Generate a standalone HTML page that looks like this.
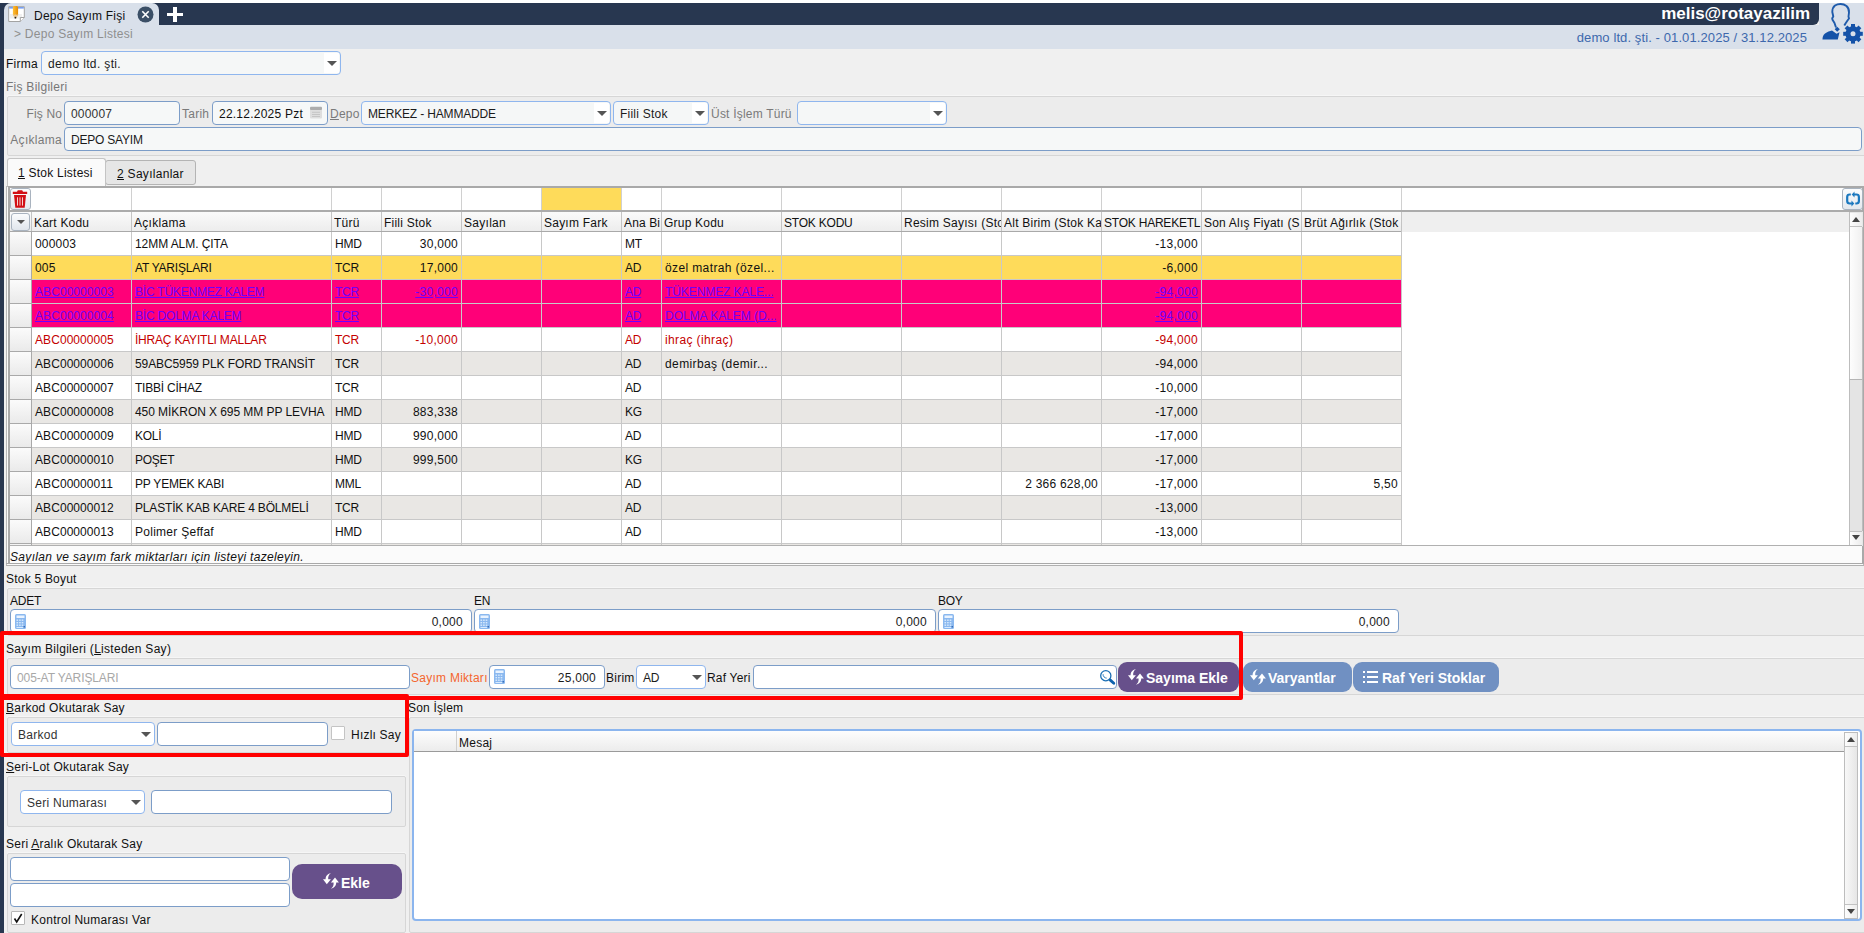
<!DOCTYPE html><html><head><meta charset="utf-8"><style>
html,body{margin:0;padding:0;}
body{width:1864px;height:933px;position:relative;overflow:hidden;background:#f0f0f0;font-family:"Liberation Sans",sans-serif;font-size:12px;color:#1b1b1b;}
div{position:absolute;box-sizing:border-box;}
.t{white-space:nowrap;}
.inp{border:1px solid #7c9dc8;border-radius:4px;background:#fff;}
.inpl{border:1px solid #7c9dc8;border-radius:4px;background:#f6f8f8;}
.cmb{border:1px solid #8fb6ee;border-radius:4px;background:#f5f7f7;}
.cmbw{border:1px solid #8fb6ee;border-radius:4px;background:#fff;}
.fs{border:1px solid #d6d6d6;border-radius:2px;background:#ececec;box-shadow:0 -1px 0 #f6f6f6;}
.arr{width:0;height:0;border-left:5px solid transparent;border-right:5px solid transparent;border-top:5px solid #555;}
.red{border:4px solid #ff0000;border-radius:2px;}
.btn{border-radius:9px;color:#fff;font-weight:bold;font-size:14px;}
u{text-decoration:underline;}
</style></head><body>

<div class="" style="left:0px;top:0px;width:1864px;height:3px;background:#fff;"></div>
<div class="" style="left:0px;top:3px;width:1819px;height:22px;background:#283750;border-bottom-right-radius:6px;"></div>
<div class="" style="left:4px;top:25px;width:1860px;height:24px;background:#d9e0ea;"></div>
<div class="" style="left:1819px;top:3px;width:45px;height:22px;background:#d9e0ea;"></div>
<div class="" style="left:0px;top:3px;width:4px;height:930px;background:#283750;"></div>
<div class="" style="left:4px;top:3px;width:155px;height:23px;background:#d9e0ea;border-top-left-radius:7px;border-top-right-radius:7px;"></div>
<svg style="position:absolute;left:4px;top:3px" width="24" height="24" viewBox="0 0 24 24">
<defs><linearGradient id="pg" x1="0" x2="1"><stop offset="0" stop-color="#ffc23a"/><stop offset="1" stop-color="#e58a00"/></linearGradient></defs>
<path d="M4.7 3.7h15.6v10.8l-4 4H4.7z" fill="#fff" stroke="#a3a3a3" stroke-width="1"/>
<rect x="5.2" y="4.2" width="14.6" height="1.3" fill="#5b8cf2"/>
<rect x="6" y="11" width="12" height="4.5" fill="#f0f0f0"/>
<path d="M16.3 18.5v-4h4" fill="#fff" stroke="#a3a3a3" stroke-width="1"/>
<path d="M8.9 4.5c0-1 0.8-1.5 2.6-1.5s2.6 0.5 2.6 1.5v7.5l-2.6 3.6l-2.6-3.6z" fill="url(#pg)"/>
<path d="M8.9 12l1 -0.8l0.8 0.9l0.8-0.9l0.8 0.9l0.8-0.9l1 0.8l-2.6 3.6z" fill="#e8c89a"/>
<circle cx="11.4" cy="14.7" r="0.9" fill="#222"/>
</svg>
<div class="t" style="left:34px;top:9px;font-size:12px;line-height:14px;letter-spacing:0.22px;color:#111;">Depo Sayım Fişi</div>
<svg style="position:absolute;left:137px;top:6px" width="17" height="17" viewBox="0 0 17 17">
<circle cx="8.5" cy="8.5" r="8" fill="#3b4f66"/>
<path d="M5.3 5.3l6.4 6.4M11.7 5.3l-6.4 6.4" stroke="#fff" stroke-width="1.6"/>
</svg>
<div class="" style="left:167px;top:13px;width:16px;height:3px;background:#fff;"></div>
<div class="" style="left:173px;top:7px;width:4px;height:15px;background:#fff;"></div>
<div class="t" style="left:14px;top:27px;font-size:12px;line-height:14px;letter-spacing:0.26px;color:#8f8f8f;">&gt; Depo Sayım Listesi</div>
<div class="t" style="right:54px;top:4px;font-size:17px;line-height:20px;color:#fff;font-weight:bold;">melis@rotayazilim</div>
<div class="t" style="right:57px;top:30px;font-size:13px;line-height:15px;color:#3d68ad;letter-spacing:0.1px;">demo ltd. şti. - 01.01.2025 / 31.12.2025</div>
<svg style="position:absolute;left:1820px;top:2px" width="44" height="44" viewBox="0 0 44 44">
<path d="M16 25.5L14.5 21L12.5 17.8L12.2 16.2L13.3 14.5L12.3 10C12.3 7 13 5 15 3.5C17 2.2 19 2 20.5 2C23 2 25 2.8 26.5 4C28.5 6 29.2 8 29 10.5L28.5 14.5L29 16.5L27.5 18.5L25.5 21.5L24.3 23.5" fill="none" stroke="#1f5bab" stroke-width="1.9" stroke-linejoin="round"/>
<path d="M17.2 24.8l2.6 2.5l-2.6 2.5l-2.5-2.5z" fill="#1452a8"/>
<path d="M2.5 37.5C2.5 35 3 33 5 31.5C7 30 10 28.8 12 28.5L16.5 31.8L19.5 30.3L17.8 37.5z" fill="#1452a8"/>
<g transform="translate(33,31.8)" fill="#1452a8">
<circle r="7.6"/><rect x="-2" y="-9.8" width="4" height="4.5" transform="rotate(0)"/><rect x="-2" y="-9.8" width="4" height="4.5" transform="rotate(45)"/><rect x="-2" y="-9.8" width="4" height="4.5" transform="rotate(90)"/><rect x="-2" y="-9.8" width="4" height="4.5" transform="rotate(135)"/><rect x="-2" y="-9.8" width="4" height="4.5" transform="rotate(180)"/><rect x="-2" y="-9.8" width="4" height="4.5" transform="rotate(225)"/><rect x="-2" y="-9.8" width="4" height="4.5" transform="rotate(270)"/><rect x="-2" y="-9.8" width="4" height="4.5" transform="rotate(315)"/>
<circle r="2.5" fill="#d9e0ea"/>
</g>
</svg>
<div class="t" style="left:6px;top:57px;font-size:12px;line-height:14px;letter-spacing:0.24px;color:#111;">Firma</div>
<div class="cmb" style="left:41px;top:51px;width:300px;height:24px;"></div>
<div class="" style="left:324px;top:53px;width:15px;height:20px;background:#fff;"></div>
<div class="arr" style="left:327px;top:61px;"></div>
<div class="t" style="left:48px;top:57px;font-size:12px;line-height:14px;letter-spacing:0.36px;color:#1b1b1b;">demo ltd. şti.</div>
<div class="t" style="left:6px;top:80px;font-size:12px;line-height:14px;letter-spacing:0.26px;color:#777;">Fiş Bilgileri</div>
<div class="fs" style="left:7px;top:96px;width:1870px;height:60px;"></div>
<div class="t" style="right:1802px;top:107px;font-size:12px;line-height:14px;letter-spacing:0.13px;color:#7a7a7a;">Fiş No</div>
<div class="inpl" style="left:64px;top:101px;width:116px;height:24px;"></div>
<div class="t" style="left:71px;top:107px;font-size:12px;line-height:14px;letter-spacing:0.20px;color:#333;">000007</div>
<div class="t" style="left:182px;top:107px;font-size:12px;line-height:14px;letter-spacing:0.24px;color:#7a7a7a;">Tarih</div>
<div class="inpl" style="left:212px;top:101px;width:116px;height:24px;"></div>
<div class="t" style="left:219px;top:107px;font-size:12px;line-height:14px;letter-spacing:0.23px;color:#111;">22.12.2025 Pzt</div>
<svg style="position:absolute;left:310px;top:106px" width="12" height="13" viewBox="0 0 12 13"><rect x="0" y="3" width="12" height="9.5" rx="1" fill="#dedede"/><rect x="0" y="0.8" width="12" height="3.2" rx="1" fill="#acacac"/><path d="M2 6.3h8M2 8.5h8M2 10.5h8" stroke="#c2c2c2" stroke-width="0.9"/></svg>
<div class="t" style="left:330px;top:107px;font-size:12px;line-height:14px;letter-spacing:0.21px;color:#7a7a7a;"><u>D</u>epo</div>
<div class="cmb" style="left:361px;top:101px;width:250px;height:24px;"></div>
<div class="" style="left:594px;top:103px;width:15px;height:20px;background:#fff;"></div>
<div class="arr" style="left:597px;top:111px;"></div>
<div class="t" style="left:368px;top:107px;font-size:12px;line-height:14px;letter-spacing:-0.16px;color:#1b1b1b;">MERKEZ - HAMMADDE</div>
<div class="cmb" style="left:613px;top:101px;width:96px;height:24px;"></div>
<div class="" style="left:692px;top:103px;width:15px;height:20px;background:#fff;"></div>
<div class="arr" style="left:695px;top:111px;"></div>
<div class="t" style="left:620px;top:107px;font-size:12px;line-height:14px;letter-spacing:0.23px;color:#1b1b1b;">Fiili Stok</div>
<div class="t" style="left:711px;top:107px;font-size:12px;line-height:14px;letter-spacing:0.21px;color:#7a7a7a;">Üst İşlem Türü</div>
<div class="cmb" style="left:797px;top:101px;width:150px;height:24px;"></div>
<div class="" style="left:930px;top:103px;width:15px;height:20px;background:#fff;"></div>
<div class="arr" style="left:933px;top:111px;"></div>
<div class="t" style="right:1802px;top:133px;font-size:12px;line-height:14px;letter-spacing:0.29px;color:#7a7a7a;">Açıklama</div>
<div class="inpl" style="left:64px;top:127px;width:1798px;height:24px;"></div>
<div class="t" style="left:71px;top:133px;font-size:12px;line-height:14px;letter-spacing:-0.21px;color:#1b1b1b;">DEPO SAYIM</div>
<div class="" style="left:105px;top:160px;width:91px;height:25px;background:#e6e6e6;border:1px solid #b4b4b4;border-radius:3px;"></div>
<div class="" style="left:7px;top:158px;width:99px;height:28px;background:#fafafa;border:1px solid #c4c4c4;border-bottom:none;border-radius:3px 3px 0 0;"></div>
<div class="t" style="left:18px;top:166px;font-size:12px;line-height:14px;letter-spacing:0.24px;color:#111;"><u>1</u> Stok Listesi</div>
<div class="t" style="left:117px;top:167px;font-size:12px;line-height:14px;letter-spacing:0.29px;color:#111;"><u>2</u> Sayılanlar</div>
<div class="" style="left:6px;top:186px;width:1858px;height:380px;border:1px solid #b9b9b9;background:#fafafa;"></div>
<div class="" style="left:8px;top:186px;width:1856px;height:378px;border:2px solid #a9a9a9;border-bottom:1px solid #a9a9a9;background:#fff;"></div>
<div class="" style="left:10px;top:188px;width:1852px;height:22px;background:#fff;"></div>
<div class="" style="left:131px;top:188px;width:1px;height:22px;background:#d0d0d0;"></div>
<div class="" style="left:331px;top:188px;width:1px;height:22px;background:#d0d0d0;"></div>
<div class="" style="left:381px;top:188px;width:1px;height:22px;background:#d0d0d0;"></div>
<div class="" style="left:461px;top:188px;width:1px;height:22px;background:#d0d0d0;"></div>
<div class="" style="left:541px;top:188px;width:1px;height:22px;background:#d0d0d0;"></div>
<div class="" style="left:621px;top:188px;width:1px;height:22px;background:#d0d0d0;"></div>
<div class="" style="left:661px;top:188px;width:1px;height:22px;background:#d0d0d0;"></div>
<div class="" style="left:781px;top:188px;width:1px;height:22px;background:#d0d0d0;"></div>
<div class="" style="left:901px;top:188px;width:1px;height:22px;background:#d0d0d0;"></div>
<div class="" style="left:1001px;top:188px;width:1px;height:22px;background:#d0d0d0;"></div>
<div class="" style="left:1101px;top:188px;width:1px;height:22px;background:#d0d0d0;"></div>
<div class="" style="left:1201px;top:188px;width:1px;height:22px;background:#d0d0d0;"></div>
<div class="" style="left:1301px;top:188px;width:1px;height:22px;background:#d0d0d0;"></div>
<div class="" style="left:1401px;top:188px;width:1px;height:22px;background:#d0d0d0;"></div>
<div class="" style="left:542px;top:188px;width:79px;height:22px;background:#fedb5a;"></div>
<div class="" style="left:10px;top:210px;width:1852px;height:2px;background:#ababab;"></div>
<div class="" style="left:10px;top:188px;width:21px;height:22px;border:1px solid #a9b3bf;border-radius:3px;background:linear-gradient(#fbfcfd,#e3e8ee);"></div>
<svg style="position:absolute;left:12px;top:190px" width="16" height="19" viewBox="0 0 16 19"><path d="M5.8 0.3h4.4l0.8 1.5h4.2v2.3H0.8V1.8H5z" fill="#d20f16"/><path d="M2 5h12l-1.3 12.8H3.3z" fill="#d20f16"/><path d="M5.5 7.3v8.3M8 7.3v8.3M10.5 7.3v8.3" stroke="#f6d0d0" stroke-width="1"/></svg>
<div class="" style="left:1842px;top:188px;width:21px;height:22px;border:1px solid #a9b3bf;border-radius:3px;background:linear-gradient(#fbfcfd,#e3e8ee);"></div>
<svg style="position:absolute;left:1843px;top:189px" width="20" height="20" viewBox="0 0 20 20"><g fill="none" stroke="#1b78bf" stroke-width="2.2"><path d="M7.8 5.5H6.7Q4.2 5.5 4.2 8V12Q4.2 14.5 6.7 14.5H9"/><path d="M12.3 14.5H13.4Q15.9 14.5 15.9 12V8Q15.9 5.5 13.4 5.5H11"/></g><g fill="#1b78bf"><path d="M8.5 11.5L11.3 14.5L8.5 17.5Z"/><path d="M11.5 2.5L8.7 5.5L11.5 8.5Z"/></g></svg>
<div class="" style="left:10px;top:212px;width:1839px;height:20px;background:#efefef;"></div>
<div class="" style="left:10px;top:212px;width:1391px;height:20px;background:linear-gradient(#fafafa,#ececec);"></div>
<div class="" style="left:31px;top:212px;width:1px;height:20px;background:#c4c4c4;"></div>
<div class="" style="left:131px;top:212px;width:1px;height:20px;background:#c4c4c4;"></div>
<div class="" style="left:331px;top:212px;width:1px;height:20px;background:#c4c4c4;"></div>
<div class="" style="left:381px;top:212px;width:1px;height:20px;background:#c4c4c4;"></div>
<div class="" style="left:461px;top:212px;width:1px;height:20px;background:#c4c4c4;"></div>
<div class="" style="left:541px;top:212px;width:1px;height:20px;background:#c4c4c4;"></div>
<div class="" style="left:621px;top:212px;width:1px;height:20px;background:#c4c4c4;"></div>
<div class="" style="left:661px;top:212px;width:1px;height:20px;background:#c4c4c4;"></div>
<div class="" style="left:781px;top:212px;width:1px;height:20px;background:#c4c4c4;"></div>
<div class="" style="left:901px;top:212px;width:1px;height:20px;background:#c4c4c4;"></div>
<div class="" style="left:1001px;top:212px;width:1px;height:20px;background:#c4c4c4;"></div>
<div class="" style="left:1101px;top:212px;width:1px;height:20px;background:#c4c4c4;"></div>
<div class="" style="left:1201px;top:212px;width:1px;height:20px;background:#c4c4c4;"></div>
<div class="" style="left:1301px;top:212px;width:1px;height:20px;background:#c4c4c4;"></div>
<div class="" style="left:1401px;top:212px;width:1px;height:20px;background:#c4c4c4;"></div>
<div class="" style="left:10px;top:231px;width:1391px;height:1px;background:#a9a9a9;"></div>
<div class="" style="left:11px;top:213px;width:19px;height:18px;border:1px solid #a9b3bf;border-radius:3px;background:linear-gradient(#fbfcfd,#e1e6ec);"></div>
<div class="arr" style="left:17px;top:220px;border-left-width:4px;border-right-width:4px;border-top-width:4px;"></div>
<div class="t" style="left:34px;top:216px;width:97px;overflow:hidden;line-height:14px;color:#111;letter-spacing:0.21px;">Kart Kodu</div>
<div class="t" style="left:134px;top:216px;width:197px;overflow:hidden;line-height:14px;color:#111;letter-spacing:0.29px;">Açıklama</div>
<div class="t" style="left:334px;top:216px;width:47px;overflow:hidden;line-height:14px;color:#111;letter-spacing:0.21px;">Türü</div>
<div class="t" style="left:384px;top:216px;width:77px;overflow:hidden;line-height:14px;color:#111;letter-spacing:0.23px;">Fiili Stok</div>
<div class="t" style="left:464px;top:216px;width:77px;overflow:hidden;line-height:14px;color:#111;letter-spacing:0.28px;">Sayılan</div>
<div class="t" style="left:544px;top:216px;width:77px;overflow:hidden;line-height:14px;color:#111;letter-spacing:0.23px;">Sayım Fark</div>
<div class="t" style="left:624px;top:216px;width:37px;overflow:hidden;line-height:14px;color:#111;letter-spacing:0.13px;">Ana Bi</div>
<div class="t" style="left:664px;top:216px;width:117px;overflow:hidden;line-height:14px;color:#111;letter-spacing:0.21px;">Grup Kodu</div>
<div class="t" style="left:784px;top:216px;width:117px;overflow:hidden;line-height:14px;color:#111;letter-spacing:-0.21px;">STOK KODU</div>
<div class="t" style="left:904px;top:216px;width:97px;overflow:hidden;line-height:14px;color:#111;letter-spacing:0.25px;">Resim Sayısı (Stok</div>
<div class="t" style="left:1004px;top:216px;width:97px;overflow:hidden;line-height:14px;color:#111;letter-spacing:0.23px;">Alt Birim (Stok Kart</div>
<div class="t" style="left:1104px;top:216px;width:97px;overflow:hidden;line-height:14px;color:#111;letter-spacing:-0.22px;">STOK HAREKETL</div>
<div class="t" style="left:1204px;top:216px;width:97px;overflow:hidden;line-height:14px;color:#111;letter-spacing:0.21px;">Son Alış Fiyatı (S</div>
<div class="t" style="left:1304px;top:216px;width:97px;overflow:hidden;line-height:14px;color:#111;letter-spacing:0.25px;">Brüt Ağırlık (Stok</div>
<div class="" style="left:31px;top:232px;width:1370px;height:23px;background:#fff;"></div>
<div class="" style="left:10px;top:232px;width:21px;height:23px;background:linear-gradient(#fbfbfb,#eaeaea);"></div>
<div class="" style="left:10px;top:255px;width:21px;height:1px;background:#a9a9a9;"></div>
<div class="" style="left:31px;top:255px;width:1370px;height:1px;background:#c8c8c8;"></div>
<div class="t" style="left:35px;top:237px;line-height:14px;color:#111;letter-spacing:0.20px;">000003</div>
<div class="t" style="left:135px;top:237px;line-height:14px;color:#111;letter-spacing:-0.07px;">12MM ALM. ÇITA</div>
<div class="t" style="left:335px;top:237px;line-height:14px;color:#111;letter-spacing:-0.26px;">HMD</div>
<div class="t" style="right:1406px;top:237px;line-height:14px;color:#111;letter-spacing:0.25px;">30,000</div>
<div class="t" style="left:625px;top:237px;line-height:14px;color:#111;letter-spacing:-0.26px;">MT</div>
<div class="t" style="right:666px;top:237px;line-height:14px;color:#111;letter-spacing:0.29px;">-13,000</div>
<div class="" style="left:31px;top:256px;width:1370px;height:23px;background:#fedb5a;"></div>
<div class="" style="left:10px;top:256px;width:21px;height:23px;background:linear-gradient(#fbfbfb,#eaeaea);"></div>
<div class="" style="left:10px;top:279px;width:21px;height:1px;background:#a9a9a9;"></div>
<div class="" style="left:31px;top:279px;width:1370px;height:1px;background:#c8c8c8;"></div>
<div class="t" style="left:35px;top:261px;line-height:14px;color:#111;letter-spacing:0.20px;">005</div>
<div class="t" style="left:135px;top:261px;line-height:14px;color:#111;letter-spacing:-0.22px;">AT YARIŞLARI</div>
<div class="t" style="left:335px;top:261px;line-height:14px;color:#111;letter-spacing:-0.26px;">TCR</div>
<div class="t" style="right:1406px;top:261px;line-height:14px;color:#111;letter-spacing:0.25px;">17,000</div>
<div class="t" style="left:625px;top:261px;line-height:14px;color:#111;letter-spacing:-0.26px;">AD</div>
<div class="t" style="left:665px;top:261px;line-height:14px;color:#111;letter-spacing:0.38px;">özel matrah (özel...</div>
<div class="t" style="right:666px;top:261px;line-height:14px;color:#111;letter-spacing:0.30px;">-6,000</div>
<div class="" style="left:31px;top:280px;width:1370px;height:23px;background:#ff0078;"></div>
<div class="" style="left:10px;top:280px;width:21px;height:23px;background:linear-gradient(#fbfbfb,#eaeaea);"></div>
<div class="" style="left:10px;top:303px;width:21px;height:1px;background:#a9a9a9;"></div>
<div class="" style="left:31px;top:303px;width:1370px;height:1px;background:#c8c8c8;"></div>
<div class="t" style="left:35px;top:285px;line-height:14px;color:#6e00ff;text-decoration:underline;letter-spacing:0.07px;">ABC00000003</div>
<div class="t" style="left:135px;top:285px;line-height:14px;color:#6e00ff;text-decoration:underline;letter-spacing:-0.21px;">BİC TÜKENMEZ KALEM</div>
<div class="t" style="left:335px;top:285px;line-height:14px;color:#6e00ff;text-decoration:underline;letter-spacing:-0.26px;">TCR</div>
<div class="t" style="right:1406px;top:285px;line-height:14px;color:#6e00ff;text-decoration:underline;letter-spacing:0.29px;">-30,000</div>
<div class="t" style="left:625px;top:285px;line-height:14px;color:#6e00ff;text-decoration:underline;letter-spacing:-0.26px;">AD</div>
<div class="t" style="left:665px;top:285px;line-height:14px;color:#6e00ff;text-decoration:underline;letter-spacing:-0.09px;">TÜKENMEZ KALE...</div>
<div class="t" style="right:666px;top:285px;line-height:14px;color:#6e00ff;text-decoration:underline;letter-spacing:0.29px;">-94,000</div>
<div class="" style="left:31px;top:304px;width:1370px;height:23px;background:#ff0078;"></div>
<div class="" style="left:10px;top:304px;width:21px;height:23px;background:linear-gradient(#fbfbfb,#eaeaea);"></div>
<div class="" style="left:10px;top:327px;width:21px;height:1px;background:#a9a9a9;"></div>
<div class="" style="left:31px;top:327px;width:1370px;height:1px;background:#c8c8c8;"></div>
<div class="t" style="left:35px;top:309px;line-height:14px;color:#6e00ff;text-decoration:underline;letter-spacing:0.07px;">ABC00000004</div>
<div class="t" style="left:135px;top:309px;line-height:14px;color:#6e00ff;text-decoration:underline;letter-spacing:-0.20px;">BİC DOLMA KALEM</div>
<div class="t" style="left:335px;top:309px;line-height:14px;color:#6e00ff;text-decoration:underline;letter-spacing:-0.26px;">TCR</div>
<div class="t" style="left:625px;top:309px;line-height:14px;color:#6e00ff;text-decoration:underline;letter-spacing:-0.26px;">AD</div>
<div class="t" style="left:665px;top:309px;line-height:14px;color:#6e00ff;text-decoration:underline;letter-spacing:-0.03px;">DOLMA KALEM (D...</div>
<div class="t" style="right:666px;top:309px;line-height:14px;color:#6e00ff;text-decoration:underline;letter-spacing:0.29px;">-94,000</div>
<div class="" style="left:31px;top:328px;width:1370px;height:23px;background:#fff;"></div>
<div class="" style="left:10px;top:328px;width:21px;height:23px;background:linear-gradient(#fbfbfb,#eaeaea);"></div>
<div class="" style="left:10px;top:351px;width:21px;height:1px;background:#a9a9a9;"></div>
<div class="" style="left:31px;top:351px;width:1370px;height:1px;background:#c8c8c8;"></div>
<div class="t" style="left:35px;top:333px;line-height:14px;color:#c40000;letter-spacing:0.07px;">ABC00000005</div>
<div class="t" style="left:135px;top:333px;line-height:14px;color:#c40000;letter-spacing:-0.21px;">İHRAÇ KAYITLI MALLAR</div>
<div class="t" style="left:335px;top:333px;line-height:14px;color:#c40000;letter-spacing:-0.26px;">TCR</div>
<div class="t" style="right:1406px;top:333px;line-height:14px;color:#c40000;letter-spacing:0.29px;">-10,000</div>
<div class="t" style="left:625px;top:333px;line-height:14px;color:#c40000;letter-spacing:-0.26px;">AD</div>
<div class="t" style="left:665px;top:333px;line-height:14px;color:#c40000;letter-spacing:0.38px;">ihraç (ihraç)</div>
<div class="t" style="right:666px;top:333px;line-height:14px;color:#c40000;letter-spacing:0.29px;">-94,000</div>
<div class="" style="left:31px;top:352px;width:1370px;height:23px;background:#e9e7e4;"></div>
<div class="" style="left:10px;top:352px;width:21px;height:23px;background:linear-gradient(#fbfbfb,#eaeaea);"></div>
<div class="" style="left:10px;top:375px;width:21px;height:1px;background:#a9a9a9;"></div>
<div class="" style="left:31px;top:375px;width:1370px;height:1px;background:#c8c8c8;"></div>
<div class="t" style="left:35px;top:357px;line-height:14px;color:#111;letter-spacing:0.07px;">ABC00000006</div>
<div class="t" style="left:135px;top:357px;line-height:14px;color:#111;letter-spacing:-0.10px;">59ABC5959 PLK FORD TRANSİT</div>
<div class="t" style="left:335px;top:357px;line-height:14px;color:#111;letter-spacing:-0.26px;">TCR</div>
<div class="t" style="left:625px;top:357px;line-height:14px;color:#111;letter-spacing:-0.26px;">AD</div>
<div class="t" style="left:665px;top:357px;line-height:14px;color:#111;letter-spacing:0.39px;">demirbaş (demir...</div>
<div class="t" style="right:666px;top:357px;line-height:14px;color:#111;letter-spacing:0.29px;">-94,000</div>
<div class="" style="left:31px;top:376px;width:1370px;height:23px;background:#fff;"></div>
<div class="" style="left:10px;top:376px;width:21px;height:23px;background:linear-gradient(#fbfbfb,#eaeaea);"></div>
<div class="" style="left:10px;top:399px;width:21px;height:1px;background:#a9a9a9;"></div>
<div class="" style="left:31px;top:399px;width:1370px;height:1px;background:#c8c8c8;"></div>
<div class="t" style="left:35px;top:381px;line-height:14px;color:#111;letter-spacing:0.07px;">ABC00000007</div>
<div class="t" style="left:135px;top:381px;line-height:14px;color:#111;letter-spacing:-0.22px;">TIBBİ CİHAZ</div>
<div class="t" style="left:335px;top:381px;line-height:14px;color:#111;letter-spacing:-0.26px;">TCR</div>
<div class="t" style="left:625px;top:381px;line-height:14px;color:#111;letter-spacing:-0.26px;">AD</div>
<div class="t" style="right:666px;top:381px;line-height:14px;color:#111;letter-spacing:0.29px;">-10,000</div>
<div class="" style="left:31px;top:400px;width:1370px;height:23px;background:#e9e7e4;"></div>
<div class="" style="left:10px;top:400px;width:21px;height:23px;background:linear-gradient(#fbfbfb,#eaeaea);"></div>
<div class="" style="left:10px;top:423px;width:21px;height:1px;background:#a9a9a9;"></div>
<div class="" style="left:31px;top:423px;width:1370px;height:1px;background:#c8c8c8;"></div>
<div class="t" style="left:35px;top:405px;line-height:14px;color:#111;letter-spacing:0.07px;">ABC00000008</div>
<div class="t" style="left:135px;top:405px;line-height:14px;color:#111;letter-spacing:-0.06px;">450 MİKRON X 695 MM PP LEVHA</div>
<div class="t" style="left:335px;top:405px;line-height:14px;color:#111;letter-spacing:-0.26px;">HMD</div>
<div class="t" style="right:1406px;top:405px;line-height:14px;color:#111;letter-spacing:0.24px;">883,338</div>
<div class="t" style="left:625px;top:405px;line-height:14px;color:#111;letter-spacing:-0.26px;">KG</div>
<div class="t" style="right:666px;top:405px;line-height:14px;color:#111;letter-spacing:0.29px;">-17,000</div>
<div class="" style="left:31px;top:424px;width:1370px;height:23px;background:#fff;"></div>
<div class="" style="left:10px;top:424px;width:21px;height:23px;background:linear-gradient(#fbfbfb,#eaeaea);"></div>
<div class="" style="left:10px;top:447px;width:21px;height:1px;background:#a9a9a9;"></div>
<div class="" style="left:31px;top:447px;width:1370px;height:1px;background:#c8c8c8;"></div>
<div class="t" style="left:35px;top:429px;line-height:14px;color:#111;letter-spacing:0.07px;">ABC00000009</div>
<div class="t" style="left:135px;top:429px;line-height:14px;color:#111;letter-spacing:-0.26px;">KOLİ</div>
<div class="t" style="left:335px;top:429px;line-height:14px;color:#111;letter-spacing:-0.26px;">HMD</div>
<div class="t" style="right:1406px;top:429px;line-height:14px;color:#111;letter-spacing:0.24px;">990,000</div>
<div class="t" style="left:625px;top:429px;line-height:14px;color:#111;letter-spacing:-0.26px;">AD</div>
<div class="t" style="right:666px;top:429px;line-height:14px;color:#111;letter-spacing:0.29px;">-17,000</div>
<div class="" style="left:31px;top:448px;width:1370px;height:23px;background:#e9e7e4;"></div>
<div class="" style="left:10px;top:448px;width:21px;height:23px;background:linear-gradient(#fbfbfb,#eaeaea);"></div>
<div class="" style="left:10px;top:471px;width:21px;height:1px;background:#a9a9a9;"></div>
<div class="" style="left:31px;top:471px;width:1370px;height:1px;background:#c8c8c8;"></div>
<div class="t" style="left:35px;top:453px;line-height:14px;color:#111;letter-spacing:0.07px;">ABC00000010</div>
<div class="t" style="left:135px;top:453px;line-height:14px;color:#111;letter-spacing:-0.26px;">POŞET</div>
<div class="t" style="left:335px;top:453px;line-height:14px;color:#111;letter-spacing:-0.26px;">HMD</div>
<div class="t" style="right:1406px;top:453px;line-height:14px;color:#111;letter-spacing:0.24px;">999,500</div>
<div class="t" style="left:625px;top:453px;line-height:14px;color:#111;letter-spacing:-0.26px;">KG</div>
<div class="t" style="right:666px;top:453px;line-height:14px;color:#111;letter-spacing:0.29px;">-17,000</div>
<div class="" style="left:31px;top:472px;width:1370px;height:23px;background:#fff;"></div>
<div class="" style="left:10px;top:472px;width:21px;height:23px;background:linear-gradient(#fbfbfb,#eaeaea);"></div>
<div class="" style="left:10px;top:495px;width:21px;height:1px;background:#a9a9a9;"></div>
<div class="" style="left:31px;top:495px;width:1370px;height:1px;background:#c8c8c8;"></div>
<div class="t" style="left:35px;top:477px;line-height:14px;color:#111;letter-spacing:0.07px;">ABC00000011</div>
<div class="t" style="left:135px;top:477px;line-height:14px;color:#111;letter-spacing:-0.19px;">PP YEMEK KABI</div>
<div class="t" style="left:335px;top:477px;line-height:14px;color:#111;letter-spacing:-0.26px;">MML</div>
<div class="t" style="left:625px;top:477px;line-height:14px;color:#111;letter-spacing:-0.26px;">AD</div>
<div class="t" style="right:766px;top:477px;line-height:14px;color:#111;letter-spacing:0.23px;">2 366 628,00</div>
<div class="t" style="right:666px;top:477px;line-height:14px;color:#111;letter-spacing:0.29px;">-17,000</div>
<div class="t" style="right:466px;top:477px;line-height:14px;color:#111;letter-spacing:0.28px;">5,50</div>
<div class="" style="left:31px;top:496px;width:1370px;height:23px;background:#e9e7e4;"></div>
<div class="" style="left:10px;top:496px;width:21px;height:23px;background:linear-gradient(#fbfbfb,#eaeaea);"></div>
<div class="" style="left:10px;top:519px;width:21px;height:1px;background:#a9a9a9;"></div>
<div class="" style="left:31px;top:519px;width:1370px;height:1px;background:#c8c8c8;"></div>
<div class="t" style="left:35px;top:501px;line-height:14px;color:#111;letter-spacing:0.07px;">ABC00000012</div>
<div class="t" style="left:135px;top:501px;line-height:14px;color:#111;letter-spacing:-0.17px;">PLASTİK KAB KARE 4 BÖLMELİ</div>
<div class="t" style="left:335px;top:501px;line-height:14px;color:#111;letter-spacing:-0.26px;">TCR</div>
<div class="t" style="left:625px;top:501px;line-height:14px;color:#111;letter-spacing:-0.26px;">AD</div>
<div class="t" style="right:666px;top:501px;line-height:14px;color:#111;letter-spacing:0.29px;">-13,000</div>
<div class="" style="left:31px;top:520px;width:1370px;height:23px;background:#fff;"></div>
<div class="" style="left:10px;top:520px;width:21px;height:23px;background:linear-gradient(#fbfbfb,#eaeaea);"></div>
<div class="" style="left:10px;top:543px;width:21px;height:1px;background:#a9a9a9;"></div>
<div class="" style="left:31px;top:543px;width:1370px;height:1px;background:#c8c8c8;"></div>
<div class="t" style="left:35px;top:525px;line-height:14px;color:#111;letter-spacing:0.07px;">ABC00000013</div>
<div class="t" style="left:135px;top:525px;line-height:14px;color:#111;letter-spacing:0.27px;">Polimer Şeffaf</div>
<div class="t" style="left:335px;top:525px;line-height:14px;color:#111;letter-spacing:-0.26px;">HMD</div>
<div class="t" style="left:625px;top:525px;line-height:14px;color:#111;letter-spacing:-0.26px;">AD</div>
<div class="t" style="right:666px;top:525px;line-height:14px;color:#111;letter-spacing:0.29px;">-13,000</div>
<div class="" style="left:31px;top:544px;width:1370px;height:1px;background:#e9e7e4;"></div>
<div class="" style="left:10px;top:544px;width:21px;height:1px;background:#f4f4f4;"></div>
<div class="" style="left:31px;top:232px;width:1px;height:313px;background:#a9a9a9;"></div>
<div class="" style="left:131px;top:232px;width:1px;height:313px;background:#c8c8c8;"></div>
<div class="" style="left:331px;top:232px;width:1px;height:313px;background:#c8c8c8;"></div>
<div class="" style="left:381px;top:232px;width:1px;height:313px;background:#c8c8c8;"></div>
<div class="" style="left:461px;top:232px;width:1px;height:313px;background:#c8c8c8;"></div>
<div class="" style="left:541px;top:232px;width:1px;height:313px;background:#c8c8c8;"></div>
<div class="" style="left:621px;top:232px;width:1px;height:313px;background:#c8c8c8;"></div>
<div class="" style="left:661px;top:232px;width:1px;height:313px;background:#c8c8c8;"></div>
<div class="" style="left:781px;top:232px;width:1px;height:313px;background:#c8c8c8;"></div>
<div class="" style="left:901px;top:232px;width:1px;height:313px;background:#c8c8c8;"></div>
<div class="" style="left:1001px;top:232px;width:1px;height:313px;background:#c8c8c8;"></div>
<div class="" style="left:1101px;top:232px;width:1px;height:313px;background:#c8c8c8;"></div>
<div class="" style="left:1201px;top:232px;width:1px;height:313px;background:#c8c8c8;"></div>
<div class="" style="left:1301px;top:232px;width:1px;height:313px;background:#c8c8c8;"></div>
<div class="" style="left:1401px;top:232px;width:1px;height:313px;background:#c8c8c8;"></div>
<div class="" style="left:1849px;top:212px;width:14px;height:334px;background:#e6e6e6;border-left:1px solid #bdbdbd;"></div>
<div class="" style="left:1850px;top:213px;width:12px;height:14px;background:linear-gradient(90deg,#fdfdfd,#ececec);border-bottom:1px solid #c2c2c2;"></div>
<div style="left:1852px;top:217px;width:0;height:0;border-left:4px solid transparent;border-right:4px solid transparent;border-bottom:5px solid #444;"></div>
<div class="" style="left:1850px;top:531px;width:12px;height:14px;background:linear-gradient(90deg,#fdfdfd,#ececec);border-top:1px solid #c2c2c2;"></div>
<div style="left:1852px;top:535px;width:0;height:0;border-left:4px solid transparent;border-right:4px solid transparent;border-top:5px solid #444;"></div>
<div class="" style="left:1849px;top:227px;width:14px;height:304px;background:#e4e4e4;border-left:1px solid #bdbdbd;border-right:1px solid #bdbdbd;"></div>
<div class="" style="left:1849px;top:227px;width:14px;height:153px;background:linear-gradient(90deg,#fdfdfd,#f0f0f0);border-left:1px solid #bdbdbd;border-right:1px solid #bdbdbd;border-bottom:1px solid #b5b5b5;"></div>
<div class="" style="left:10px;top:545px;width:1852px;height:1px;background:#b0b0b0;"></div>
<div class="" style="left:10px;top:546px;width:1852px;height:17px;background:#fbfbfb;"></div>
<div class="t" style="left:10px;top:550px;line-height:14px;font-style:italic;font-size:12px;letter-spacing:0.32px;color:#111;">Sayılan ve sayım fark miktarları için listeyi tazeleyin.</div>
<div class="" style="left:6px;top:563px;width:1858px;height:1px;background:#a9a9a9;"></div>
<div class="" style="left:6px;top:565px;width:1858px;height:1px;background:#b0b0b0;"></div>
<div class="t" style="left:6px;top:572px;font-size:12px;line-height:14px;letter-spacing:0.22px;color:#111;">Stok 5 Boyut</div>
<div class="fs" style="left:7px;top:588px;width:1870px;height:48px;"></div>
<div class="t" style="left:10px;top:594px;font-size:12px;line-height:14px;letter-spacing:-0.26px;color:#111;">ADET</div>
<div class="t" style="left:474px;top:594px;font-size:12px;line-height:14px;letter-spacing:-0.26px;color:#111;">EN</div>
<div class="t" style="left:938px;top:594px;font-size:12px;line-height:14px;letter-spacing:-0.26px;color:#111;">BOY</div>
<div class="inp" style="left:10px;top:609px;width:462px;height:24px;"></div>
<svg style="position:absolute;left:15px;top:614px" width="11" height="15" viewBox="0 0 11 15"><rect x="0" y="0" width="11" height="15" rx="1.5" fill="#8ab8ef"/><rect x="1.5" y="1.5" width="8" height="2.5" fill="#e9f3ff"/><g fill="#d8eafd"><rect x="1.5" y="5.5" width="1.6" height="1.4"/><rect x="4.1" y="5.5" width="1.6" height="1.4"/><rect x="6.7" y="5.5" width="1.6" height="1.4"/><rect x="1.5" y="8" width="1.6" height="1.4"/><rect x="4.1" y="8" width="1.6" height="1.4"/><rect x="6.7" y="8" width="1.6" height="1.4"/><rect x="1.5" y="10.5" width="1.6" height="1.4"/><rect x="4.1" y="10.5" width="1.6" height="1.4"/><rect x="6.7" y="10.5" width="1.6" height="1.4"/><rect x="1.5" y="13" width="6.8" height="1"/></g><rect x="8.5" y="12" width="1.5" height="1.5" fill="#3a6fb8"/></svg>
<div class="t" style="right:1401px;top:615px;font-size:12px;line-height:14px;letter-spacing:0.26px;color:#1b1b1b;">0,000</div>
<div class="inp" style="left:474px;top:609px;width:462px;height:24px;"></div>
<svg style="position:absolute;left:479px;top:614px" width="11" height="15" viewBox="0 0 11 15"><rect x="0" y="0" width="11" height="15" rx="1.5" fill="#8ab8ef"/><rect x="1.5" y="1.5" width="8" height="2.5" fill="#e9f3ff"/><g fill="#d8eafd"><rect x="1.5" y="5.5" width="1.6" height="1.4"/><rect x="4.1" y="5.5" width="1.6" height="1.4"/><rect x="6.7" y="5.5" width="1.6" height="1.4"/><rect x="1.5" y="8" width="1.6" height="1.4"/><rect x="4.1" y="8" width="1.6" height="1.4"/><rect x="6.7" y="8" width="1.6" height="1.4"/><rect x="1.5" y="10.5" width="1.6" height="1.4"/><rect x="4.1" y="10.5" width="1.6" height="1.4"/><rect x="6.7" y="10.5" width="1.6" height="1.4"/><rect x="1.5" y="13" width="6.8" height="1"/></g><rect x="8.5" y="12" width="1.5" height="1.5" fill="#3a6fb8"/></svg>
<div class="t" style="right:937px;top:615px;font-size:12px;line-height:14px;letter-spacing:0.26px;color:#1b1b1b;">0,000</div>
<div class="inp" style="left:938px;top:609px;width:461px;height:24px;"></div>
<svg style="position:absolute;left:943px;top:614px" width="11" height="15" viewBox="0 0 11 15"><rect x="0" y="0" width="11" height="15" rx="1.5" fill="#8ab8ef"/><rect x="1.5" y="1.5" width="8" height="2.5" fill="#e9f3ff"/><g fill="#d8eafd"><rect x="1.5" y="5.5" width="1.6" height="1.4"/><rect x="4.1" y="5.5" width="1.6" height="1.4"/><rect x="6.7" y="5.5" width="1.6" height="1.4"/><rect x="1.5" y="8" width="1.6" height="1.4"/><rect x="4.1" y="8" width="1.6" height="1.4"/><rect x="6.7" y="8" width="1.6" height="1.4"/><rect x="1.5" y="10.5" width="1.6" height="1.4"/><rect x="4.1" y="10.5" width="1.6" height="1.4"/><rect x="6.7" y="10.5" width="1.6" height="1.4"/><rect x="1.5" y="13" width="6.8" height="1"/></g><rect x="8.5" y="12" width="1.5" height="1.5" fill="#3a6fb8"/></svg>
<div class="t" style="right:474px;top:615px;font-size:12px;line-height:14px;letter-spacing:0.26px;color:#1b1b1b;">0,000</div>
<div class="t" style="left:6px;top:642px;font-size:12px;line-height:14px;letter-spacing:0.28px;color:#111;">Sayım Bilgileri (<u>L</u>isteden Say)</div>
<div class="fs" style="left:7px;top:658px;width:1870px;height:37px;"></div>
<div class="inp" style="left:10px;top:665px;width:400px;height:24px;"></div>
<div class="t" style="left:17px;top:671px;font-size:12px;line-height:14px;letter-spacing:-0.10px;color:#a8a8a8;">005-AT YARIŞLARI</div>
<div class="t" style="left:411px;top:671px;font-size:12px;line-height:14px;letter-spacing:0.26px;color:#f4662e;">Sayım Miktarı</div>
<div class="inp" style="left:489px;top:665px;width:116px;height:24px;"></div>
<svg style="position:absolute;left:494px;top:669px" width="11" height="15" viewBox="0 0 11 15"><rect x="0" y="0" width="11" height="15" rx="1.5" fill="#8ab8ef"/><rect x="1.5" y="1.5" width="8" height="2.5" fill="#e9f3ff"/><g fill="#d8eafd"><rect x="1.5" y="5.5" width="1.6" height="1.4"/><rect x="4.1" y="5.5" width="1.6" height="1.4"/><rect x="6.7" y="5.5" width="1.6" height="1.4"/><rect x="1.5" y="8" width="1.6" height="1.4"/><rect x="4.1" y="8" width="1.6" height="1.4"/><rect x="6.7" y="8" width="1.6" height="1.4"/><rect x="1.5" y="10.5" width="1.6" height="1.4"/><rect x="4.1" y="10.5" width="1.6" height="1.4"/><rect x="6.7" y="10.5" width="1.6" height="1.4"/><rect x="1.5" y="13" width="6.8" height="1"/></g><rect x="8.5" y="12" width="1.5" height="1.5" fill="#3a6fb8"/></svg>
<div class="t" style="right:1268px;top:671px;font-size:12px;line-height:14px;letter-spacing:0.25px;color:#1b1b1b;">25,000</div>
<div class="t" style="left:606px;top:671px;font-size:12px;line-height:14px;letter-spacing:0.24px;color:#111;">Birim</div>
<div class="cmbw" style="left:636px;top:665px;width:70px;height:24px;"></div>
<div class="" style="left:689px;top:667px;width:15px;height:20px;background:#fff;"></div>
<div class="arr" style="left:692px;top:675px;"></div>
<div class="t" style="left:643px;top:671px;font-size:12px;line-height:14px;letter-spacing:-0.26px;color:#1b1b1b;">AD</div>
<div class="t" style="left:707px;top:671px;font-size:12px;line-height:14px;letter-spacing:0.19px;color:#111;">Raf Yeri</div>
<div class="inp" style="left:753px;top:665px;width:364px;height:24px;"></div>
<svg style="position:absolute;left:1099px;top:669px" width="17" height="17" viewBox="0 0 17 17"><circle cx="6.8" cy="6.7" r="5.1" fill="none" stroke="#1b6fb5" stroke-width="1.3"/><path d="M4.1 5.2a3.6 3.6 0 0 0 3.6 3.9" stroke="#1b6fb5" stroke-width="0.9" fill="none"/><path d="M11.3 11.1l3.5 3.2" stroke="#0e62ad" stroke-width="2.8" stroke-linecap="round"/></svg>
<div class="btn" style="left:1118px;top:662px;width:121px;height:30px;background:#67508b;"></div>
<svg style="position:absolute;left:1122px;top:664px" width="24" height="24" viewBox="0 0 24 24"><path d="M13.9 5C10 6 8.6 8.5 8.6 11.3H6L9.8 16.3L13.9 11.3H11.2C11 8.5 11.8 6.5 13.9 5Z" fill="#fff"/><path d="M13.9 20.7C17.8 19.7 19.2 17.2 19.2 14.4H21.9L18 9.4L13.9 14.4H16.6C16.8 17.2 16 19.2 13.9 20.7Z" fill="#fff"/></svg>
<div class="t" style="left:1146px;top:670px;font-size:14px;line-height:16px;color:#fff;font-weight:bold;">Sayıma Ekle</div>
<div class="btn" style="left:1243px;top:662px;width:109px;height:30px;background:#7090c2;"></div>
<svg style="position:absolute;left:1244px;top:664px" width="24" height="24" viewBox="0 0 24 24"><path d="M13.9 5C10 6 8.6 8.5 8.6 11.3H6L9.8 16.3L13.9 11.3H11.2C11 8.5 11.8 6.5 13.9 5Z" fill="#fff"/><path d="M13.9 20.7C17.8 19.7 19.2 17.2 19.2 14.4H21.9L18 9.4L13.9 14.4H16.6C16.8 17.2 16 19.2 13.9 20.7Z" fill="#fff"/></svg>
<div class="t" style="left:1268px;top:670px;font-size:14px;line-height:16px;color:#fff;font-weight:bold;">Varyantlar</div>
<div class="btn" style="left:1353px;top:662px;width:146px;height:30px;background:#7090c2;"></div>
<svg style="position:absolute;left:1363px;top:670px" width="15" height="14" viewBox="0 0 15 14"><g fill="#fff"><rect x="0" y="1" width="2" height="2"/><rect x="0" y="6" width="2" height="2"/><rect x="0" y="11" width="2" height="2"/><rect x="4" y="1" width="11" height="2"/><rect x="4" y="6" width="11" height="2"/><rect x="4" y="11" width="11" height="2"/></g></svg>
<div class="t" style="left:1382px;top:670px;font-size:14px;line-height:16px;color:#fff;font-weight:bold;">Raf Yeri Stoklar</div>
<div class="t" style="left:6px;top:701px;font-size:12px;line-height:14px;letter-spacing:0.25px;color:#111;"><u>B</u>arkod Okutarak Say</div>
<div class="fs" style="left:7px;top:717px;width:399px;height:36px;"></div>
<div class="cmbw" style="left:11px;top:722px;width:144px;height:24px;"></div>
<div class="" style="left:138px;top:724px;width:15px;height:20px;background:#fff;"></div>
<div class="arr" style="left:141px;top:732px;"></div>
<div class="t" style="left:18px;top:728px;font-size:12px;line-height:14px;letter-spacing:0.27px;color:#333;">Barkod</div>
<div class="inp" style="left:157px;top:722px;width:171px;height:24px;"></div>
<div class="" style="left:331px;top:726px;width:14px;height:14px;border:1px solid #c4c4c4;background:#fff;border-radius:1px;"></div>
<div class="t" style="left:351px;top:728px;font-size:12px;line-height:14px;letter-spacing:0.21px;color:#111;">Hızlı Say</div>
<div class="t" style="left:6px;top:760px;font-size:12px;line-height:14px;letter-spacing:0.24px;color:#111;"><u>S</u>eri-Lot Okutarak Say</div>
<div class="fs" style="left:7px;top:776px;width:399px;height:51px;"></div>
<div class="cmbw" style="left:20px;top:790px;width:125px;height:24px;"></div>
<div class="" style="left:128px;top:792px;width:15px;height:20px;background:#fff;"></div>
<div class="arr" style="left:131px;top:800px;"></div>
<div class="t" style="left:27px;top:796px;font-size:12px;line-height:14px;letter-spacing:0.26px;color:#333;">Seri Numarası</div>
<div class="inp" style="left:151px;top:790px;width:241px;height:24px;"></div>
<div class="t" style="left:6px;top:837px;font-size:12px;line-height:14px;letter-spacing:0.24px;color:#111;">Seri <u>A</u>ralık Okutarak Say</div>
<div class="fs" style="left:7px;top:853px;width:399px;height:80px;"></div>
<div class="inp" style="left:10px;top:857px;width:280px;height:24px;"></div>
<div class="inp" style="left:10px;top:883px;width:280px;height:24px;"></div>
<div class="btn" style="left:292px;top:864px;width:110px;height:35px;background:#67508b;border-radius:10px;"></div>
<svg style="position:absolute;left:317px;top:868px" width="24" height="24" viewBox="0 0 24 24"><path d="M13.9 5C10 6 8.6 8.5 8.6 11.3H6L9.8 16.3L13.9 11.3H11.2C11 8.5 11.8 6.5 13.9 5Z" fill="#fff"/><path d="M13.9 20.7C17.8 19.7 19.2 17.2 19.2 14.4H21.9L18 9.4L13.9 14.4H16.6C16.8 17.2 16 19.2 13.9 20.7Z" fill="#fff"/></svg>
<div class="t" style="left:341px;top:875px;font-size:14px;line-height:16px;color:#fff;font-weight:bold;">Ekle</div>
<div class="" style="left:11px;top:911px;width:14px;height:14px;border:1px solid #b8b8b8;background:#fff;border-radius:1px;"></div>
<svg style="position:absolute;left:12px;top:912px" width="12" height="12" viewBox="0 0 12 12"><path d="M2.5 6.5l2.2 3.5l5-8" fill="none" stroke="#111" stroke-width="1.6"/></svg>
<div class="t" style="left:31px;top:913px;font-size:12px;line-height:14px;letter-spacing:0.26px;color:#111;">Kontrol Numarası Var</div>
<div class="t" style="left:408px;top:701px;font-size:12px;line-height:14px;letter-spacing:0.21px;color:#111;">Son İşlem</div>
<div class="fs" style="left:409px;top:717px;width:1470px;height:216px;"></div>
<div class="" style="left:412px;top:729px;width:1450px;height:192px;border:2px solid #8bb5ee;border-radius:4px;background:#fff;"></div>
<div class="" style="left:414px;top:731px;width:1430px;height:20px;background:linear-gradient(#fdfdfd,#ececec);"></div>
<div class="" style="left:414px;top:751px;width:1430px;height:1px;background:#9a9a9a;"></div>
<div class="" style="left:456px;top:731px;width:1px;height:20px;background:#cfcfcf;"></div>
<div class="t" style="left:459px;top:736px;font-size:12px;line-height:14px;letter-spacing:0.24px;color:#111;">Mesaj</div>
<div class="" style="left:1844px;top:732px;width:14px;height:187px;background:linear-gradient(90deg,#f8f8f8,#e6e6e6);border:1px solid #bdbdbd;"></div>
<div class="" style="left:1845px;top:733px;width:12px;height:14px;background:linear-gradient(90deg,#fdfdfd,#ececec);border-bottom:1px solid #c2c2c2;"></div>
<div style="left:1847px;top:737px;width:0;height:0;border-left:4px solid transparent;border-right:4px solid transparent;border-bottom:5px solid #444;"></div>
<div class="" style="left:1845px;top:904px;width:12px;height:14px;background:linear-gradient(90deg,#fdfdfd,#ececec);border-top:1px solid #c2c2c2;"></div>
<div style="left:1847px;top:909px;width:0;height:0;border-left:4px solid transparent;border-right:4px solid transparent;border-top:5px solid #444;"></div>
<div class="red" style="left:0px;top:631px;width:1243px;height:69px;"></div>
<div class="red" style="left:0px;top:694px;width:409px;height:63px;"></div>
</body></html>
